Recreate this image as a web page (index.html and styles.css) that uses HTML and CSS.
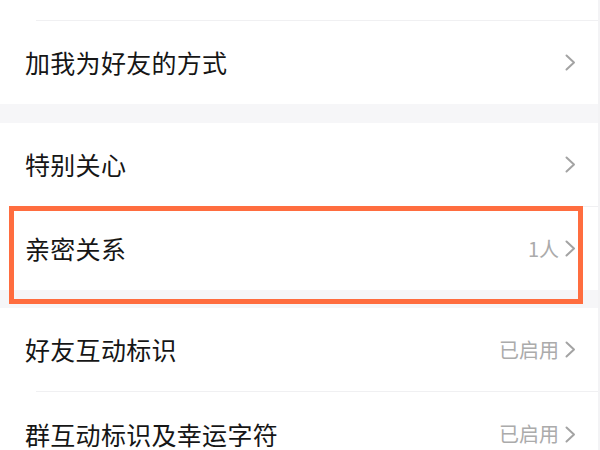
FILE: index.html
```html
<!DOCTYPE html>
<html lang="zh-CN">
<head>
<meta charset="utf-8">
<title>设置</title>
<link rel="stylesheet" href="styles.css">
</head>
<body>
<div class="page">
  <div class="top-fill"></div>
  <div class="sep"></div>
  <div class="row">
    <span class="label">加我为好友的方式</span>
    <span class="right"><svg class="chev" viewBox="0 0 11 17"><path d="M1.5 1.5 L9 8.5 L1.5 15.5"/></svg></span>
  </div>
  <div class="gap"></div>
  <div class="row">
    <span class="label">特别关心</span>
    <span class="right"><svg class="chev" viewBox="0 0 11 17"><path d="M1.5 1.5 L9 8.5 L1.5 15.5"/></svg></span>
  </div>
  <div class="sep"></div>
  <div class="row highlight-anchor">
    <span class="label">亲密关系</span>
    <span class="right"><span class="value">1人</span><svg class="chev" viewBox="0 0 11 17"><path d="M1.5 1.5 L9 8.5 L1.5 15.5"/></svg></span>
    <div class="highlight"></div>
  </div>
  <div class="gap gap-b"></div>
  <div class="row">
    <span class="label">好友互动标识</span>
    <span class="right"><span class="value">已启用</span><svg class="chev" viewBox="0 0 11 17"><path d="M1.5 1.5 L9 8.5 L1.5 15.5"/></svg></span>
  </div>
  <div class="sep"></div>
  <div class="row row-last">
    <span class="label">群互动标识及幸运字符</span>
    <span class="right"><span class="value">已启用</span><svg class="chev" viewBox="0 0 11 17"><path d="M1.5 1.5 L9 8.5 L1.5 15.5"/></svg></span>
  </div>
  <div class="edge"></div>
</div>
</body>
</html>
```

FILE: styles.css
```css
html, body {
  margin: 0;
  padding: 0;
  background: #ffffff;
}
body {
  font-family: "Noto Sans CJK SC", "Noto Sans", sans-serif;
  color: #111111;
}
.page {
  position: relative;
  width: 600px;
  height: 450px;
  overflow: hidden;
  background: #ffffff;
}
.top-fill {
  height: 20px;
}
.sep {
  height: 1px;
  margin-left: 36px;
  background: #f0f0f2;
}
.row {
  height: 83px;
  display: flex;
  align-items: center;
  justify-content: space-between;
  padding: 0 24px 0 25px;
  box-sizing: border-box;
}
.row-last {
  height: 84px;
}
.label {
  font-size: 25px;
  line-height: 1;
  letter-spacing: 0.3px;
  color: #161616;
}
.right {
  display: flex;
  align-items: center;
  gap: 6px;
}
.value {
  font-size: 20px;
  line-height: 1;
  color: #ababab;
}
.chev {
  width: 11px;
  height: 17px;
  display: block;
}
.chev path {
  fill: none;
  stroke: #a3a3a3;
  stroke-width: 2;
  stroke-linecap: round;
  stroke-linejoin: round;
}
.gap {
  height: 19px;
  background: #f6f6f8;
}
.gap-b {
  height: 18px;
}
.highlight-anchor {
  position: relative;
}
.highlight {
  position: absolute;
  left: 9px;
  top: -1px;
  width: 574px;
  height: 98px;
  border: 5px solid #ff6d3f;
  box-sizing: border-box;
  pointer-events: none;
}
.edge {
  position: absolute;
  right: 0;
  top: 0;
  width: 2px;
  height: 450px;
  background: #f3f3f5;
}
```
